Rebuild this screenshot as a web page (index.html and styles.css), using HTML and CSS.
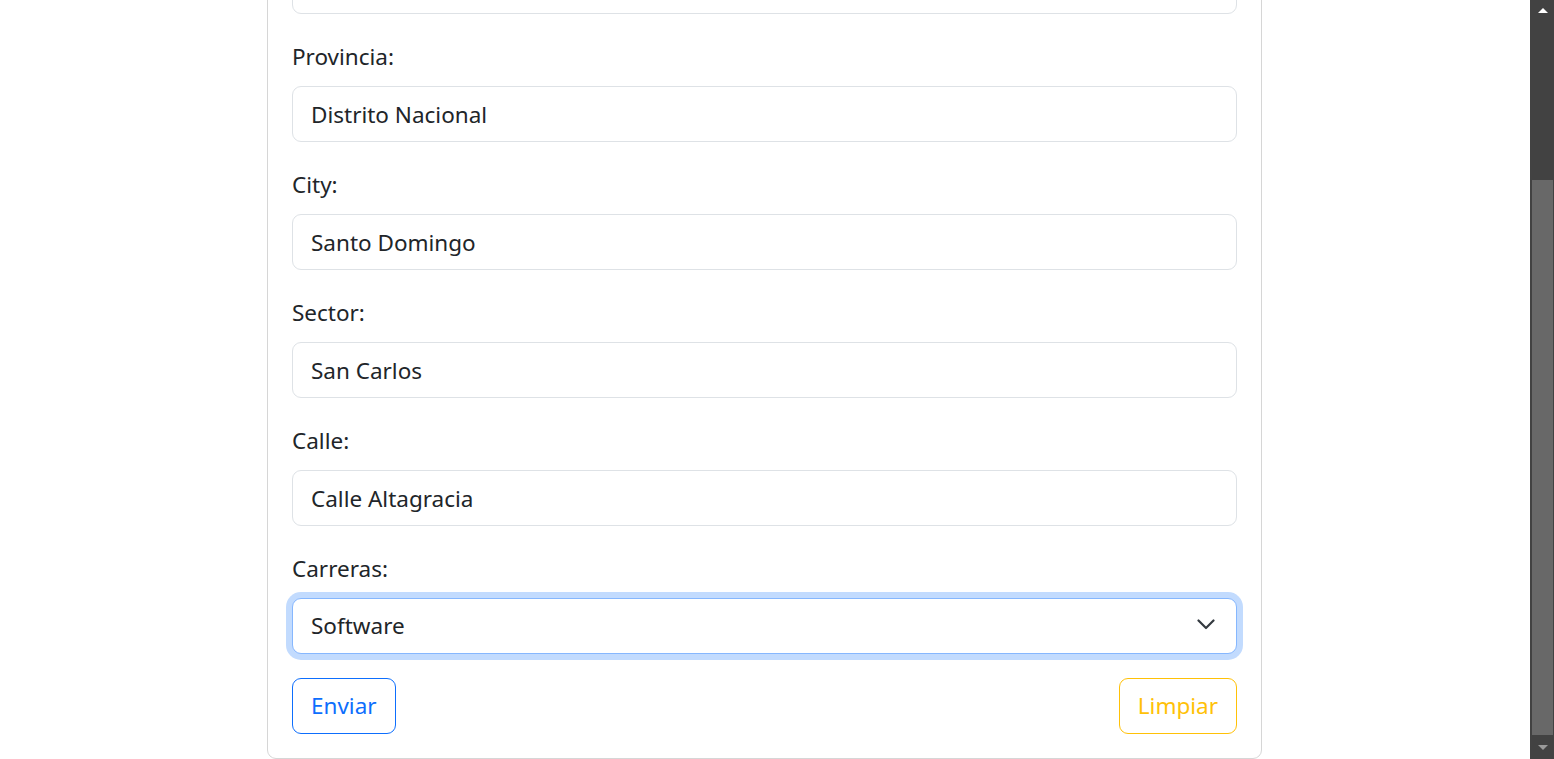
FILE: index.html
```html
<!DOCTYPE html>
<html lang="es">
<head>
<meta charset="utf-8">
<title>Formulario</title>
<link rel="stylesheet" href="styles.css">
</head>
<body>
<div class="viewport">
  <div class="page">
    <form class="card">
      <div class="field">
        <label class="label">Nombre:</label>
        <input class="control" type="text" value="Juan Perez">
      </div>
      <div class="field">
        <label class="label">Pais:</label>
        <input class="control" type="text" value="Santo Domingo">
      </div>
      <div class="field">
        <label class="label">Provincia:</label>
        <input class="control" type="text" value="Distrito Nacional">
      </div>
      <div class="field">
        <label class="label">City:</label>
        <input class="control" type="text" value="Santo Domingo">
      </div>
      <div class="field">
        <label class="label">Sector:</label>
        <input class="control" type="text" value="San Carlos">
      </div>
      <div class="field">
        <label class="label">Calle:</label>
        <input class="control" type="text" value="Calle Altagracia">
      </div>
      <div class="field">
        <label class="label">Carreras:</label>
        <div class="select-wrap">
          <select class="control select focused">
            <option>Software</option>
          </select>
          <svg class="chevron" width="18" height="11" viewBox="0 0 18 11"><path d="M1.5 1.5l7.5 7.5 7.5-7.5" fill="none" stroke="#343a40" stroke-width="2.2" stroke-linecap="round" stroke-linejoin="round"/></svg>
        </div>
      </div>
      <div class="actions">
        <button type="button" class="btn btn-primary">Enviar</button>
        <button type="button" class="btn btn-warning">Limpiar</button>
      </div>
    </form>
  </div>
</div>
<div class="scrollbar">
  <div class="sb-arrow sb-up"></div>
  <div class="sb-track"><div class="sb-thumb"></div></div>
  <div class="sb-arrow sb-down"></div>
</div>
</body>
</html>
```
FILE: styles.css
```css
html, body {
  margin: 0;
  padding: 0;
  height: 100%;
  overflow: hidden;
}
body {
  display: flex;
  font-family: "Noto Sans", "Open Sans", sans-serif;
  color: #212529;
  background: #fff;
}
.viewport {
  flex: 1;
  display: flex;
  flex-direction: column;
  justify-content: flex-end;
  overflow: hidden;
  min-width: 0;
}
.page {
  display: flex;
  justify-content: center;
  padding-right: 1px;
}
.card {
  width: 995px;
  box-sizing: border-box;
  border: 1px solid #d6d6d6;
  border-radius: 9px;
  padding: 24px;
  margin-bottom: 0;
  display: flex;
  flex-direction: column;
}
.field {
  display: flex;
  flex-direction: column;
  margin-bottom: 24px;
}
.label {
  font-size: 22.5px;
  line-height: 36px;
  padding-top: 1px;
  margin-bottom: 11px;
}
.control {
  font-family: inherit;
  font-size: 22.5px;
  line-height: 36px;
  color: #212529;
  height: 56px;
  box-sizing: border-box;
  padding: 9px 18px;
  border: 1px solid #dee2e6;
  border-radius: 9px;
  background: #fff;
  width: 100%;
  outline: none;
}
.select-wrap {
  position: relative;
}
.select {
  appearance: none;
  -webkit-appearance: none;
  padding-right: 54px;
}
.focused {
  border-color: #86b7fe;
  box-shadow: 0 0 0 6px rgba(13, 110, 253, 0.25);
}
.chevron {
  position: absolute;
  right: 22px;
  top: 21px;
  pointer-events: none;
}
.actions {
  display: flex;
  justify-content: space-between;
}
.btn {
  font-family: inherit;
  font-size: 22.5px;
  line-height: 36px;
  height: 56px;
  box-sizing: border-box;
  padding: 9px 18px;
  border-radius: 9px;
  background: #fff;
  cursor: pointer;
}
.btn-primary {
  border: 1px solid #0d6efd;
  color: #0d6efd;
}
.btn-warning {
  border: 1px solid #ffc107;
  color: #ffc107;
}
.scrollbar {
  width: 24px;
  flex: none;
  background: #424242;
  display: flex;
  flex-direction: column;
  padding-left: 1px;
  box-sizing: border-box;
}
.sb-arrow {
  height: 24px;
  flex: none;
  display: flex;
  align-items: center;
  justify-content: center;
}
.sb-up::before {
  content: "";
  border-left: 5px solid transparent;
  border-right: 5px solid transparent;
  border-bottom: 5px solid #ffffff;
  margin-top: -4px;
}
.sb-down::before {
  content: "";
  border-left: 5px solid transparent;
  border-right: 5px solid transparent;
  border-top: 5px solid #9a9a9a;
}
.sb-track {
  flex: 1;
  display: flex;
  flex-direction: column;
  justify-content: flex-end;
  padding: 0 1px 0 1px;
}
.sb-thumb {
  height: 555px;
  background: #686868;
}
```
